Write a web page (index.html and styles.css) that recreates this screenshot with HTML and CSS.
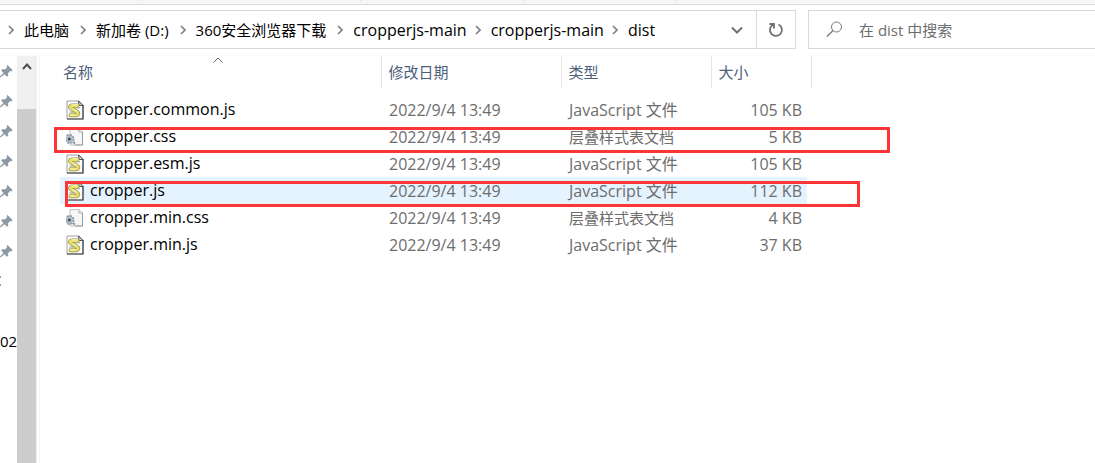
FILE: index.html
```
<!DOCTYPE html>
<html lang="zh-CN">
<head>
    <meta charset="UTF-8">
    <meta name="viewport" content="width=device-width, initial-scale=1.0">
    <title>dist</title>
    <link rel="stylesheet" href="styles.css">
</head>
<body>
    <!-- shared icons -->
    <svg class="sprite" width="0" height="0" aria-hidden="true">
        <symbol id="sep" viewBox="0 0 6 10">
            <path d="M1 1l4 4-4 4" fill="none" stroke="#808080" stroke-width="1.7"/>
        </symbol>
        <symbol id="pin" viewBox="0 0 13 14">
            <path d="M7.500 1l5 5-1 1.400-1.400-.3-2.300 2.300.6 2-1.400 1.400-2.500-2.500L.5 13.500l-.8-.8L3.500 9 1.200 6.500l1.400-1.400 2.300.5L7.200 3.300 6.500 2z" fill="#8c99a5"/>
        </symbol>
        <symbol id="js" viewBox="0 0 18 20">
            <path d="M1 1h12l4 4v14H1z" fill="#fdfdfd" stroke="#a0a0a0"/>
            <path d="M17 5v14H1" fill="none" stroke="#404040" stroke-width="1.2"/>
            <path d="M12.500 1l4.500 4.500h-4z" fill="#ddd" stroke="#505050"/>
            <path d="M11.500 5.500H6c-2 0-2.500 1.800-.8 2.800l6 3.700c1.800 1.200 1 3.200-1 3.200H4.500" fill="none" stroke="#8d8b62" stroke-width="4" stroke-linecap="round"/>
            <path d="M11.500 5.500H6c-2 0-2.500 1.800-.8 2.800l6 3.700c1.800 1.200 1 3.200-1 3.200H4.500" fill="none" stroke="#e8df62" stroke-width="2.800" stroke-linecap="round"/>
            <path d="M6.500 5h5M6.500 8.500l4.500 3M4.500 15h5" stroke="#fbf8c5" fill="none"/>
            <path d="M9.500 7.800H14M3.500 12h4.500" stroke="#99976b" fill="none"/>
        </symbol>
        <symbol id="css" viewBox="0 0 18 20">
            <path d="M4 1.500h9l3.500 3.500v13H4z" fill="#f7f7f7" stroke="#c4c4c4"/>
            <path d="M13 1.500V5h3.500" fill="#e6e6e6" stroke="#b0b0b0"/>
            <path d="M16.500 5v13H9" fill="none" stroke="#999"/>
            <circle cx="3.500" cy="12" r="4" fill="#c3cbd1" stroke="#8b969e" stroke-width="2" stroke-dasharray="2 1.100"/>
            <circle cx="3.500" cy="12" r="3.200" fill="#b4bfc7"/>
            <circle cx="3.300" cy="12" r="1.500" fill="#3f4c56"/>
            <path d="M6.500 15.500l2-1 1 1.500-1.500 1.500z" fill="#8c969d"/>
        </symbol>
    </svg>

    <div class="ribbon"><i></i><i></i><i></i></div>

    <header class="toolbar">
        <div class="address">
            <nav class="crumbs">
                <svg class="sep"><use href="#sep"/></svg><a href="#">此电脑</a>
                <svg class="sep"><use href="#sep"/></svg><a href="#">新加卷 (D:)</a>
                <svg class="sep"><use href="#sep"/></svg><a href="#">360安全浏览器下载</a>
                <svg class="sep"><use href="#sep"/></svg><a class="latin" href="#">cropperjs-main</a>
                <svg class="sep"><use href="#sep"/></svg><a class="latin" href="#">cropperjs-main</a>
                <svg class="sep"><use href="#sep"/></svg><a class="latin" href="#">dist</a>
            </nav>
            <button class="history" aria-label="历史记录">
                <svg width="12" height="8" viewBox="0 0 12 8"><path d="M1 1.500l5 5 5-5" fill="none" stroke="#707070" stroke-width="2"/></svg>
            </button>
            <button class="refresh" aria-label="刷新">
                <svg width="16" height="16" viewBox="0 0 16 16"><path d="M10.500 2.500a6 6 0 1 1-5.500.2" fill="none" stroke="#707070" stroke-width="1.800"/><path d="M1.500 2h4.500v4.500" fill="none" stroke="#707070" stroke-width="1.800"/></svg>
            </button>
        </div>
        <label class="search">
            <svg width="17" height="17" viewBox="0 0 17 17"><circle cx="10.500" cy="6" r="5" fill="none" stroke="#777"/><path d="M7 9.500L1 15.500" stroke="#777" stroke-width="1.200"/></svg>
            <input type="text" placeholder="在 dist 中搜索" aria-label="搜索">
        </label>
    </header>

    <div class="explorer">
        <aside class="tree">
            <ul>
                <li><svg class="pin"><use href="#pin"/></svg></li>
                <li><svg class="pin"><use href="#pin"/></svg></li>
                <li><svg class="pin"><use href="#pin"/></svg></li>
                <li><svg class="pin"><use href="#pin"/></svg></li>
                <li><svg class="pin"><use href="#pin"/></svg></li>
                <li><svg class="pin"><use href="#pin"/></svg></li>
                <li><svg class="pin"><use href="#pin"/></svg></li>
                <li class="drive"><svg width="2" height="10" viewBox="0 0 2 10"><path d="M0 1h1M0 9h1" stroke="#3f94d1" stroke-width="1.500"/></svg></li>
                <li></li>
                <li class="folder">02</li>
            </ul>
        </aside>
        <div class="scrollbar">
            <button aria-label="向上滚动"><svg width="10" height="7" viewBox="0 0 10 7"><path d="M1 6l4-4.500L9 6" fill="none" stroke="#505050" stroke-width="2"/></svg></button>
            <div class="thumb"></div>
        </div>

        <main class="files">
            <table>
                <colgroup>
                    <col class="col-name"><col class="col-date"><col class="col-type"><col class="col-size">
                </colgroup>
                <thead>
                    <tr>
                        <th>名称<svg class="sort" width="10" height="6" viewBox="0 0 10 6"><path d="M.5 5.500L5 1l4.500 4.500" fill="none" stroke="#666"/></svg></th>
                        <th>修改日期</th>
                        <th>类型</th>
                        <th>大小</th>
                    </tr>
                </thead>
                <tbody>
                    <tr><td><svg class="icon"><use href="#js"/></svg>cropper.common.js</td><td>2022/9/4 13:49</td><td>JavaScript 文件</td><td>105 KB</td></tr>
                    <tr><td><svg class="icon"><use href="#css"/></svg>cropper.css</td><td>2022/9/4 13:49</td><td class="cjk">层叠样式表文档</td><td>5 KB</td></tr>
                    <tr><td><svg class="icon"><use href="#js"/></svg>cropper.esm.js</td><td>2022/9/4 13:49</td><td>JavaScript 文件</td><td>105 KB</td></tr>
                    <tr class="active"><td><svg class="icon"><use href="#js"/></svg>cropper.js</td><td>2022/9/4 13:49</td><td>JavaScript 文件</td><td>112 KB</td></tr>
                    <tr><td><svg class="icon"><use href="#css"/></svg>cropper.min.css</td><td>2022/9/4 13:49</td><td class="cjk">层叠样式表文档</td><td>4 KB</td></tr>
                    <tr><td><svg class="icon"><use href="#js"/></svg>cropper.min.js</td><td>2022/9/4 13:49</td><td>JavaScript 文件</td><td>37 KB</td></tr>
                </tbody>
            </table>
            <div class="mark mark-css"></div>
            <div class="mark mark-js"></div>
        </main>
    </div>
</body>
</html>
```

FILE: styles.css
```
* {
    box-sizing: border-box;
}

body {
    margin: 0;
    min-height: 100vh;
    display: flex;
    flex-direction: column;
    overflow: hidden;
    background: #fff;
    color: #000;
    font-family: "Open Sans", "Noto Sans CJK SC", sans-serif;
    font-size: 15px;
    line-height: 20px;
}

button {
    display: flex;
    align-items: center;
    justify-content: center;
    padding: 0;
    border: none;
    background: none;
}

.sprite {
    position: absolute;
}

/* bottom edge of the ribbon */
.ribbon {
    display: flex;
    height: 5px;
    padding-left: 141px;
    background: #f5f6f7;
    border-bottom: 1px solid #dadbdc;
}

.ribbon i {
    width: 192px;
    height: 1px;
    border-right: 1px solid #dcdde0;
}

.ribbon i:first-child {
    width: 220px;
    border-left: 1px solid #dcdde0;
}

.ribbon i:nth-child(2) {
    width: 163px;
}

.ribbon i:last-child {
    width: 152px;
}

/* address bar and search */
.toolbar {
    display: flex;
    gap: 12px;
    padding-top: 5px;
}

.address {
    display: flex;
    flex: 1;
    height: 39px;
    border: 1px solid #d9d9d9;
    border-left: none;
}

.crumbs {
    display: flex;
    flex: 1;
    align-items: center;
    padding-left: 8px;
    white-space: nowrap;
}

.crumbs a {
    color: #000;
    text-decoration: none;
}

.crumbs .latin {
    font-size: 16px;
}

.sep {
    width: 6px;
    height: 10px;
    margin-right: 10px;
}

.crumbs a + .sep {
    margin-left: 11px;
}

.crumbs .latin + .sep {
    margin-left: 8px;
}

.history {
    width: 38px;
}

.refresh {
    width: 39px;
    border-left: 1px solid #d9d9d9;
}

.search {
    display: flex;
    align-items: center;
    gap: 16px;
    width: 287px;
    height: 39px;
    padding-left: 17px;
    border: 1px solid #d9d9d9;
    border-right: none;
}

.search input {
    flex: 1;
    min-width: 0;
    padding: 0;
    border: none;
    outline: none;
    font: inherit;
}

.search input::placeholder {
    color: #6d6d6d;
    opacity: 1;
}

/* left pane */
.explorer {
    display: flex;
    flex: 1;
    padding-top: 7px;
}

.tree {
    width: 17px;
}

.tree ul {
    margin: 0;
    padding: 0;
    list-style: none;
}

.tree li {
    display: flex;
    align-items: center;
    justify-content: flex-end;
    height: 30px;
    padding-right: 4px;
}

.tree .drive {
    justify-content: flex-start;
}

.tree .folder {
    justify-content: flex-start;
    padding: 0;
}

.pin {
    width: 13px;
    height: 14px;
    flex: none;
}

.scrollbar {
    display: flex;
    flex-direction: column;
    width: 20px;
    background: #f0f0f0;
}

.scrollbar button {
    height: 21px;
}

.thumb {
    flex: 1;
    width: 19px;
    margin-top: 32px;
    background: #cdcdcd;
}

/* file list */
.files {
    position: relative;
    flex: 1;
    margin-left: 2px;
    padding-left: 20px;
    border-left: 1px solid #f3f3f3;
}

table {
    width: 751px;
    table-layout: fixed;
    border-collapse: collapse;
}

.col-name {
    width: 321px;
}

.col-date {
    width: 180px;
}

.col-type {
    width: 150px;
}

.col-size {
    width: 100px;
}

th {
    position: relative;
    height: 32px;
    padding: 0 0 0 7px;
    border-right: 1px solid #e5e5e5;
    color: #4c607a;
    font-weight: normal;
    text-align: left;
}

th:first-child {
    padding-left: 3px;
}

.sort {
    position: absolute;
    top: 1px;
    left: calc(50% - 7px);
}

/* space between the header and the first row */
tbody::before {
    content: "";
    display: table-row;
    height: 8px;
}

td {
    height: 27px;
    padding: 0 0 0 8px;
    color: #6d6d6d;
    font-size: 16px;
    white-space: nowrap;
}

td:first-child {
    padding-left: 6px;
    color: #000;
}

td:last-child {
    padding-right: 9px;
    text-align: right;
}

td.cjk {
    font-size: 15px;
}

.icon {
    width: 18px;
    height: 20px;
    margin-right: 6px;
    vertical-align: middle;
    overflow: visible;
}

.active {
    background: linear-gradient(#e5f3ff, #e5f3ff) no-repeat 0 0 / calc(100% - 4px) 100%;
}

/* red highlight frames */
.mark {
    position: absolute;
    height: 26px;
    border: 3px solid #fc3636;
}

.mark-css {
    top: 71px;
    left: 14px;
    width: 836px;
}

.mark-js {
    top: 125px;
    left: 25px;
    width: 795px;
}
```
